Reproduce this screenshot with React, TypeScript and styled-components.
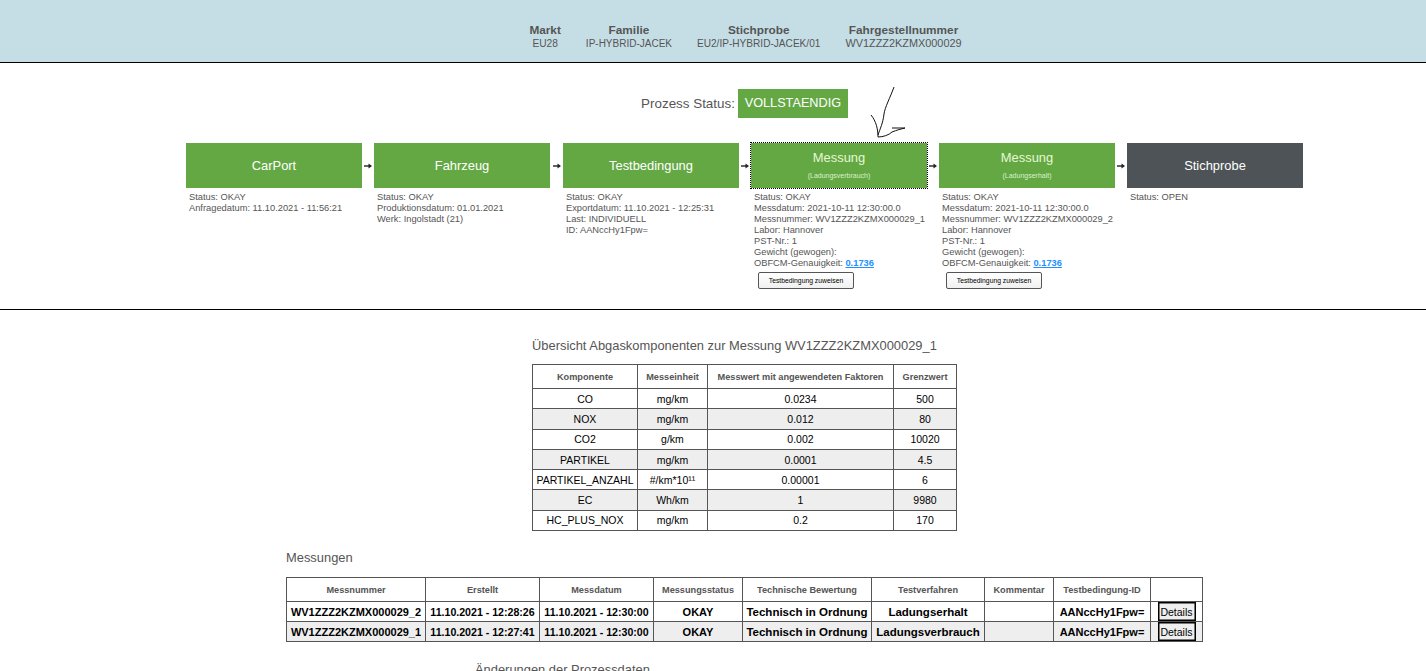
import React from "react";
import styled, { createGlobalStyle } from "styled-components";

const GlobalStyle = createGlobalStyle`
  html, body {
    margin: 0;
    padding: 0;
    height: 671px;
    overflow: hidden;
    background: #fff;
  }
  body {
    font-family: "Liberation Sans", Arial, sans-serif;
    color: #555;
  }
`;

const Header = styled.header`
  height: 38px;
  background-color: #c5dee6;
  border-bottom: 1px solid #000;
  display: flex;
  justify-content: center;
  align-items: flex-start;
  padding: 24px 0 0 65px;
  gap: 25px;
`;

const HeaderItem = styled.div<{ $size: number }>`
  text-align: center;
  line-height: 13px;
  color: #555;
  font-size: ${(p) => p.$size}px;
  b {
    display: block;
    font-size: 11.8px;
    line-height: 13px;
  }
`;

const ProcessSection = styled.section`
  position: relative;
  height: 246px;
  border-bottom: 1px solid #000;
`;

const StatusLine = styled.div`
  display: flex;
  justify-content: center;
  align-items: center;
  gap: 3px;
  height: 29px;
  padding: 26px 0 0 63px;
  font-size: 13.4px;
  color: #555;
`;

const StatusBadge = styled.span`
  background: #64a844;
  color: #fff;
  width: 110px;
  text-align: center;
  height: 29px;
  line-height: 29px;
  font-size: 12.7px;
`;

const Steps = styled.div`
  display: flex;
  margin: 25px 0 0 186px;
  align-items: flex-start;
`;

const Step = styled.div`
  width: 176px;
  flex: none;
`;

const StepBox = styled.div<{ $dark?: boolean; $focus?: boolean }>`
  box-sizing: border-box;
  height: 45px;
  padding-bottom: 1px;
  background: ${(p) => (p.$dark ? "#4d5356" : "#64a844")};
  color: #fff;
  display: flex;
  flex-direction: column;
  align-items: center;
  justify-content: center;
  font-size: 12.9px;
  outline: ${(p) => (p.$focus ? "1px dotted #000" : "none")};
`;

const StepTitle = styled.span`
  color: #e6f8d2;
  line-height: 16px;
`;

const StepSub = styled.small`
  font-size: 7px;
  line-height: 10px;
  margin-top: 5px;
  color: #d9f2c8;
`;

const Connector = styled.div<{ $wide?: boolean }>`
  flex: none;
  width: ${(p) => (p.$wide ? 13 : 12)}px;
  height: 45px;
  display: flex;
  align-items: center;
  justify-content: center;
`;

const StepInfo = styled.div`
  padding: 4px 0 0 3px;
  font-size: 9.3px;
  line-height: 11px;
  color: #555;
  white-space: nowrap;
`;

const InfoLink = styled.a`
  color: #1e90ff;
  font-weight: bold;
  text-decoration: underline;
`;

const AssignButton = styled.button`
  display: block;
  margin: 3px 0 0 4px;
  width: 96px;
  height: 17px;
  padding: 0;
  background: linear-gradient(#fff, #f0f0f0);
  border: 1px solid #555;
  border-radius: 2px;
  font-family: inherit;
  font-size: 6.8px;
  color: #000;
`;

const ArrowMark = styled.svg`
  position: absolute;
  left: 865px;
  top: 24px;
`;

const Heading = styled.h3<{ $left: number; $top: number }>`
  margin: ${(p) => p.$top}px 0 0 ${(p) => p.$left}px;
  font-size: 12.9px;
  line-height: 16px;
  font-weight: normal;
  color: #555;
`;

const Table = styled.table<{ $left: number; $gap: number }>`
  margin: ${(p) => p.$gap}px 0 0 ${(p) => p.$left}px;
  border-collapse: collapse;
  table-layout: fixed;
  font-size: 10.5px;
  color: #000;
  th, td {
    border: 1px solid #555;
    text-align: center;
    padding: 0;
    white-space: nowrap;
  }
  th {
    font-size: 9.2px;
    font-weight: bold;
    color: #555;
    height: 23px;
  }
  td {
    height: 19.3px;
  }
  tbody tr:nth-child(even) td {
    background: #eee;
  }
`;

const MeasurementTable = styled(Table)`
  font-size: 11px;
  font-weight: bold;
  td {
    height: 19px;
  }
  td:nth-child(2), td:nth-child(3) {
    font-size: 10.6px;
  }
  td:nth-child(5), td:nth-child(6) {
    font-size: 11.5px;
  }
`;

const DetailsButton = styled.button`
  display: block;
  margin: 0 auto;
  width: 38px;
  height: 19px;
  padding: 0;
  background: #efefef;
  border: 1px solid #000;
  box-shadow: inset 0 0 0 0.5px #000;
  font-family: inherit;
  font-size: 10.5px;
  color: #000;
`;

const headerItems = [
  ["Markt", "EU28", 10.2],
  ["Familie", "IP-HYBRID-JACEK", 10],
  ["Stichprobe", "EU2/IP-HYBRID-JACEK/01", 10.1],
  ["Fahrgestellnummer", "WV1ZZZ2KZMX000029", 10.9],
] as const;

const Arrow = () => (
  <svg width="8" height="6" viewBox="0 0 8 6">
    <path d="M0 3H5" stroke="#222" strokeWidth="1.4" />
    <path d="M4.5 .5 8 3 4.5 5.5z" fill="#222" />
  </svg>
);

const measurementLines = (nr: string) => [
  "Status: OKAY",
  "Messdatum: 2021-10-11 12:30:00.0",
  `Messnummer: ${nr}`,
  "Labor: Hannover",
  "PST-Nr.: 1",
  "Gewicht (gewogen):",
];

const Lines = ({ lines }: { lines: string[] }) => (
  <>
    {lines.map((l) => (
      <div key={l}>{l}</div>
    ))}
  </>
);

const Measurement = ({ nr, sub, focus }: { nr: string; sub: string; focus?: boolean }) => (
  <Step>
    <StepBox $focus={focus}>
      <StepTitle>Messung</StepTitle>
      <StepSub>({sub})</StepSub>
    </StepBox>
    <StepInfo>
      <Lines lines={measurementLines(nr)} />
      <div>
        OBFCM-Genauigkeit: <InfoLink>0.1736</InfoLink>
      </div>
      <AssignButton>Testbedingung zuweisen</AssignButton>
    </StepInfo>
  </Step>
);

const components = [
  ["CO", "mg/km", "0.0234", "500"],
  ["NOX", "mg/km", "0.012", "80"],
  ["CO2", "g/km", "0.002", "10020"],
  ["PARTIKEL", "mg/km", "0.0001", "4.5"],
  ["PARTIKEL_ANZAHL", "#/km*10¹¹", "0.00001", "6"],
  ["EC", "Wh/km", "1", "9980"],
  ["HC_PLUS_NOX", "mg/km", "0.2", "170"],
];

const measurements = [
  ["WV1ZZZ2KZMX000029_2", "11.10.2021 - 12:28:26", "11.10.2021 - 12:30:00", "OKAY", "Technisch in Ordnung", "Ladungserhalt", "", "AANccHy1Fpw="],
  ["WV1ZZZ2KZMX000029_1", "11.10.2021 - 12:27:41", "11.10.2021 - 12:30:00", "OKAY", "Technisch in Ordnung", "Ladungsverbrauch", "", "AANccHy1Fpw="],
];

const App: React.FC = () => {
  return (
    <>
      <GlobalStyle />
      <Header>
        {headerItems.map(([label, value, size]) => (
          <HeaderItem key={label} $size={size}>
            <b>{label}</b>
            {value}
          </HeaderItem>
        ))}
      </Header>
      <ProcessSection>
        <StatusLine>
          Prozess Status: <StatusBadge>VOLLSTAENDIG</StatusBadge>
        </StatusLine>
        <ArrowMark width="44" height="58" viewBox="0 0 44 58" fill="none" stroke="#111" strokeWidth="1">
          <path d="M29 0C25 11 20 20 19 27C18 36 15 42 13 48" />
          <path d="M6 28C11 34 13 42 13 50" />
          <path d="M13 50C18 50 24 48 27 45C32 43 36 42 40 41H27" />
        </ArrowMark>
        <Steps>
          <Step>
            <StepBox>CarPort</StepBox>
            <StepInfo>
              <Lines lines={["Status: OKAY", "Anfragedatum: 11.10.2021 - 11:56:21"]} />
            </StepInfo>
          </Step>
          <Connector><Arrow /></Connector>
          <Step>
            <StepBox>Fahrzeug</StepBox>
            <StepInfo>
              <Lines lines={["Status: OKAY", "Produktionsdatum: 01.01.2021", "Werk: Ingolstadt (21)"]} />
            </StepInfo>
          </Step>
          <Connector $wide><Arrow /></Connector>
          <Step>
            <StepBox>Testbedingung</StepBox>
            <StepInfo>
              <Lines lines={["Status: OKAY", "Exportdatum: 11.10.2021 - 12:25:31", "Last: INDIVIDUELL", "ID: AANccHy1Fpw="]} />
            </StepInfo>
          </Step>
          <Connector><Arrow /></Connector>
          <Measurement nr="WV1ZZZ2KZMX000029_1" sub="Ladungsverbrauch" focus />
          <Connector><Arrow /></Connector>
          <Measurement nr="WV1ZZZ2KZMX000029_2" sub="Ladungserhalt" />
          <Connector><Arrow /></Connector>
          <Step>
            <StepBox $dark>Stichprobe</StepBox>
            <StepInfo>
              <Lines lines={["Status: OPEN"]} />
            </StepInfo>
          </Step>
        </Steps>
      </ProcessSection>
      <main>
        <Heading $left={532} $top={28}>Übersicht Abgaskomponenten zur Messung WV1ZZZ2KZMX000029_1</Heading>
        <Table $left={532} $gap={10}>
          <colgroup>
            <col width="105" /><col width="70" /><col width="186" /><col width="63" />
          </colgroup>
          <thead>
            <tr>
              <th>Komponente</th><th>Messeinheit</th><th>Messwert mit angewendeten Faktoren</th><th>Grenzwert</th>
            </tr>
          </thead>
          <tbody>
            {components.map((r) => (
              <tr key={r[0]}>
                {r.map((c, i) => <td key={i}>{c}</td>)}
              </tr>
            ))}
          </tbody>
        </Table>
        <Heading $left={286} $top={19}>Messungen</Heading>
        <MeasurementTable $left={286} $gap={11}>
          <colgroup>
            <col width="139" /><col width="114" /><col width="114" /><col width="89" />
            <col width="129" /><col width="113" /><col width="69" /><col width="97" /><col width="52" />
          </colgroup>
          <thead>
            <tr>
              {["Messnummer", "Erstellt", "Messdatum", "Messungsstatus", "Technische Bewertung", "Testverfahren", "Kommentar", "Testbedingung-ID", ""].map((h, i) => (
                <th key={i}>{h}</th>
              ))}
            </tr>
          </thead>
          <tbody>
            {measurements.map((r) => (
              <tr key={r[0]}>
                {r.map((c, i) => <td key={i}>{c}</td>)}
                <td><DetailsButton>Details</DetailsButton></td>
              </tr>
            ))}
          </tbody>
        </MeasurementTable>
        <Heading $left={475} $top={20}>Änderungen der Prozessdaten</Heading>
      </main>
    </>
  );
};

export default App;
